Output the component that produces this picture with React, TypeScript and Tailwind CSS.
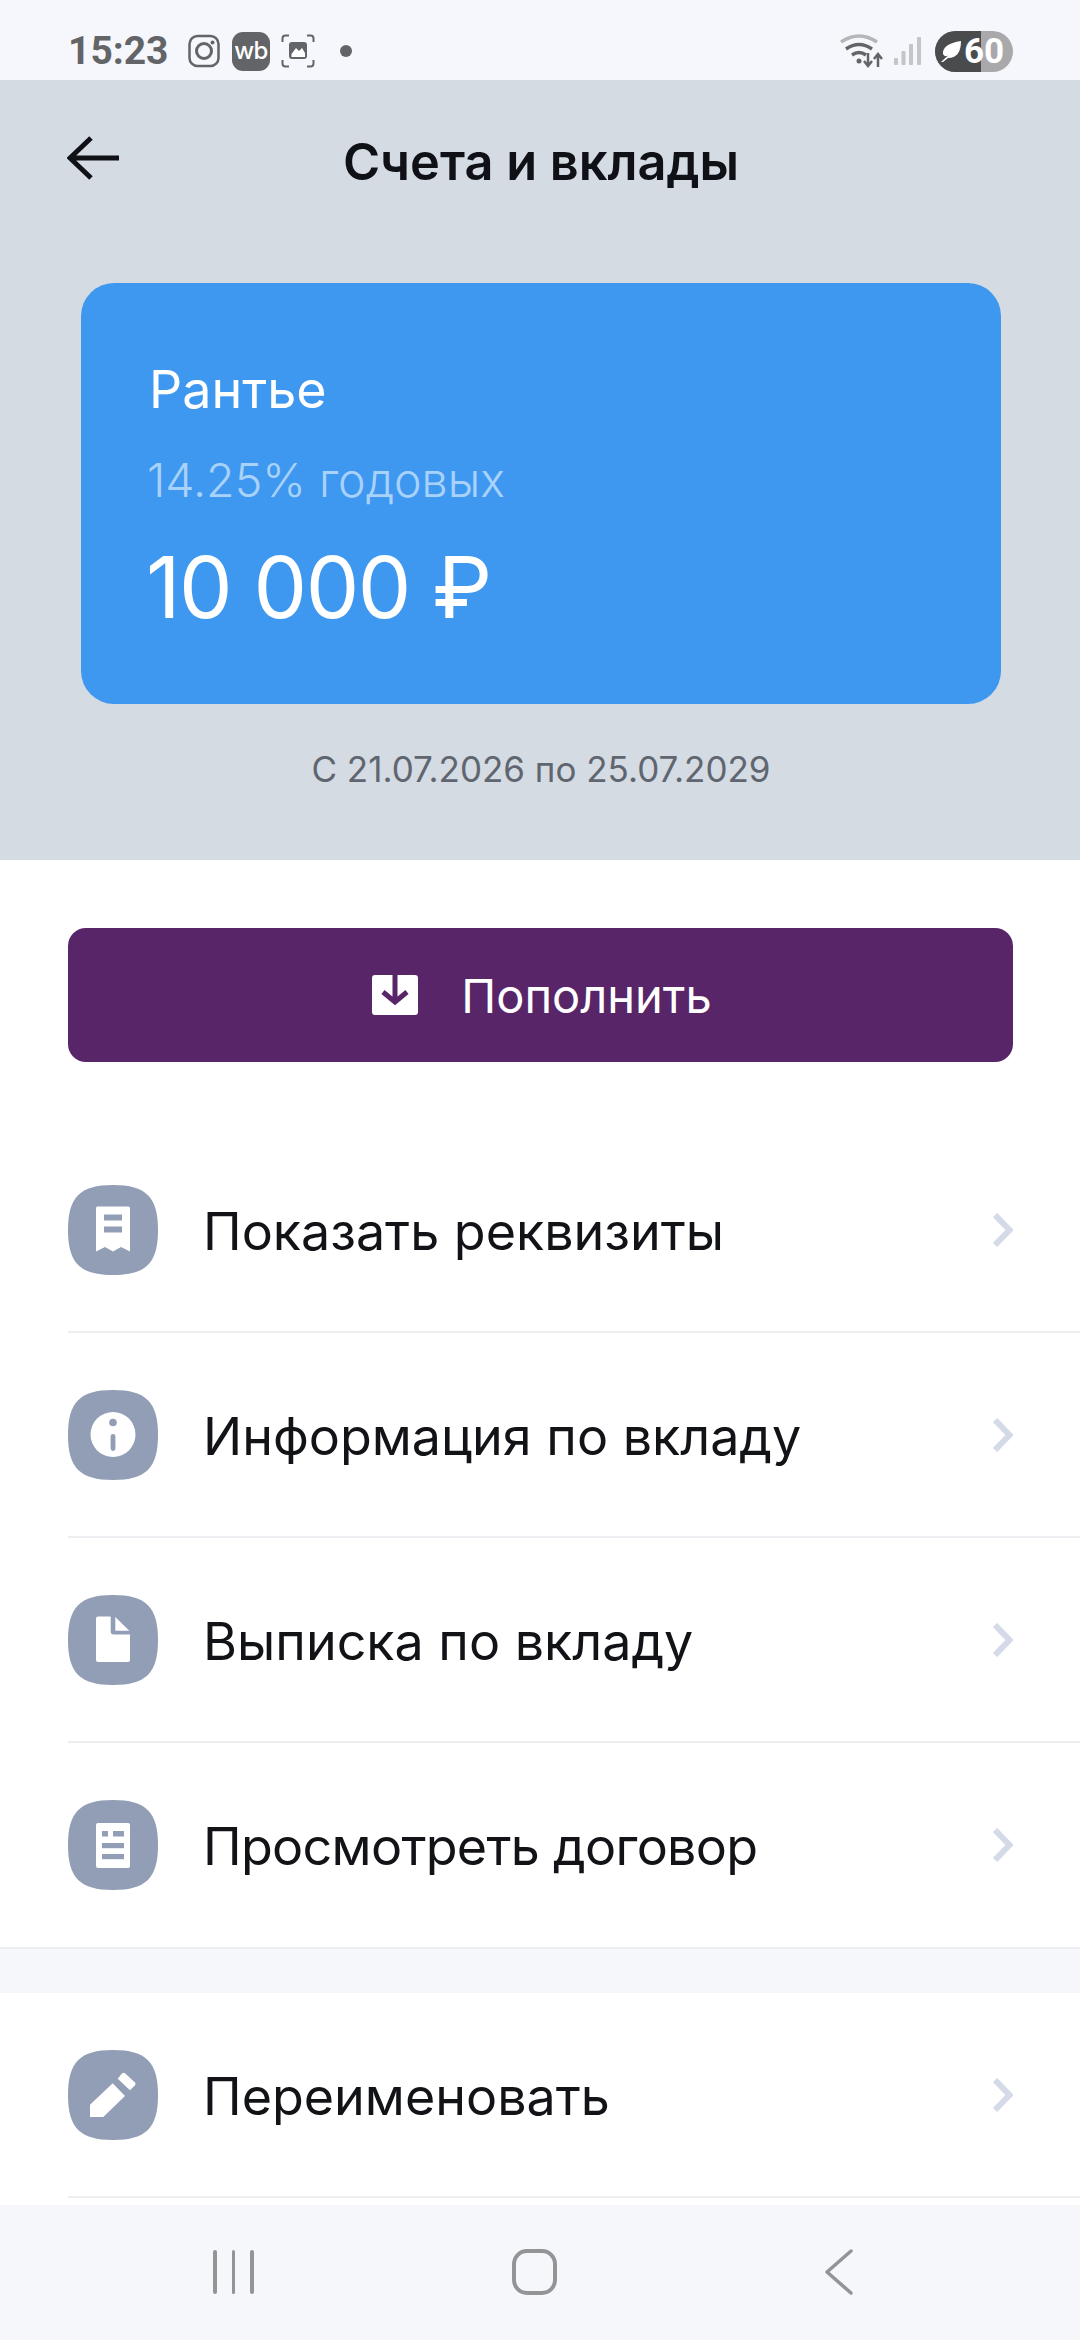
import { ReactNode } from 'react';

const font = { fontFamily: 'Inter, "Noto Sans", sans-serif' };
const ICON_BG = '#919eb5';

function Squircle({ children }: { children: ReactNode }) {
  return (
    <svg width="90" height="90" viewBox="0 0 90 90" className="shrink-0">
      <path
        d="M45 0C78 0 90 12 90 45C90 78 78 90 45 90C12 90 0 78 0 45C0 12 12 0 45 0Z"
        fill={ICON_BG}
      />
      {children}
    </svg>
  );
}

const ReceiptIcon = () => (
  <Squircle>
    <path d="M28 23Q28 21.500 29.500 21.500H60.500Q62 21.500 62 23V66.500L53 62L45 66.500L37 62L28 66.500Z" fill="#fff" />
    <rect x="36" y="29.500" width="18" height="6" fill={ICON_BG} />
    <rect x="36" y="41.500" width="18" height="6" fill={ICON_BG} />
  </Squircle>
);

const InfoIcon = () => (
  <Squircle>
    <circle cx="45" cy="44.500" r="22.500" fill="#fff" />
    <circle cx="45" cy="32.500" r="3.800" fill={ICON_BG} />
    <rect x="42.600" y="44" width="4.800" height="17" rx="2.400" fill={ICON_BG} />
  </Squircle>
);

const FileIcon = () => (
  <Squircle>
    <path d="M28 23.500Q28 21.500 30 21.500H42.700V36.500Q42.700 39.500 45.700 39.500H62V65Q62 67 60 67H30Q28 67 28 65Z" fill="#fff" />
    <path d="M47.300 22L61.300 35.700H47.300Z" fill="#fff" />
  </Squircle>
);

const ContractIcon = () => (
  <Squircle>
    <rect x="28" y="23" width="34" height="45" rx="2" fill="#fff" />
    <rect x="34" y="31" width="6" height="5.500" fill={ICON_BG} />
    <rect x="45" y="31" width="11" height="5.500" fill={ICON_BG} />
    <rect x="34" y="43" width="22" height="5.200" fill={ICON_BG} />
    <rect x="34" y="54" width="22" height="5.200" fill={ICON_BG} />
  </Squircle>
);

const PencilIcon = () => (
  <Squircle>
    <path d="M22 54.700L44.700 33.300L57 46L35.300 67H22Z" fill="#fff" />
    <path d="M49.700 28.700L54 23.500Q55.300 22 57 23.300L67 32.500Q68.200 33.800 67 35.200L62 40.200Z" fill="#fff" />
  </Squircle>
);

function Chevron() {
  return (
    <svg width="20" height="34" viewBox="0 0 20 34" fill="none" className="shrink-0">
      <path d="M2 2L16.500 17L2 32" stroke="#d5dae8" strokeWidth="6" />
    </svg>
  );
}

function Row({ icon, label, line = true, tight = false }: { icon: ReactNode; label: string; line?: boolean; tight?: boolean }) {
  return (
    <div className="pl-[68px]">
      <div className={`flex items-center pr-[67px] ${line ? 'h-[205px] border-b-2 border-[#eceef1]' : 'h-[204px]'}`}>
        {icon}
        <span className={`ml-[45px] mt-[4px] flex-1 text-[52px] leading-none text-[#111317] ${tight ? 'tracking-[-0.700px]' : ''}`}>{label}</span>
        <Chevron />
      </div>
    </div>
  );
}

function StatusBar() {
  return (
    <div className="flex h-[80px] shrink-0 items-center justify-between bg-[#f5f7fc] pl-[68px] pr-[67px] pt-[22px]">
      <div className="flex items-center">
        <span className="w-[97px] text-[39px] font-bold leading-none text-[#636467]" style={{ fontFamily: 'Roboto, sans-serif' }}>15:23</span>
        <svg width="32" height="34" viewBox="0 0 32 34" fill="none" className="ml-[23px]">
          <rect x="1.500" y="2" width="29" height="30" rx="8" stroke="#636467" strokeWidth="2.500" />
          <circle cx="16" cy="17" r="7.500" stroke="#636467" strokeWidth="3" />
          <circle cx="24.500" cy="8.500" r="2" fill="#636467" />
        </svg>
        <div className="ml-[12px] flex h-[39px] w-[38px] items-center justify-center rounded-[11px] bg-[#636467] text-[24px] font-medium leading-none tracking-[-0.500px] text-white">wb</div>
        <svg width="34" height="34" viewBox="0 0 34 34" fill="none" className="ml-[11px]">
          <path d="M1.500 8V4.500Q1.500 1.500 4.500 1.500H8M26 1.500H29.500Q32.500 1.500 32.500 4.500V8M32.500 26V29.500Q32.500 32.500 29.500 32.500H26M8 32.500H4.500Q1.500 32.500 1.500 29.500V26" stroke="#636467" strokeWidth="2" />
          <rect x="8" y="8" width="18" height="17" rx="3" fill="#636467" />
          <path d="M10.500 23V20L15 14L18 17L21 14L24 19V23Z" fill="#fff" />
        </svg>
        <div className="ml-[25px] h-[12px] w-[12px] rounded-full bg-[#636467]" />
      </div>
      <div className="flex items-center">
        <svg width="44" height="34" viewBox="0 0 44 34" fill="none">
          <path d="M1 8Q19 -4 37 8" stroke="#b5b6b8" strokeWidth="3.500" />
          <path d="M6 15Q19 6 32 15" stroke="#636467" strokeWidth="3.500" />
          <path d="M12 21Q19 16 26 21" stroke="#636467" strokeWidth="3.500" />
          <circle cx="19" cy="27" r="2.500" fill="#636467" />
          <path d="M28 19V32M24 27L28 32L32 27M38 33V20M34 25L38 20L42 25" stroke="#636467" strokeWidth="2.500" />
        </svg>
        <svg width="27" height="28" viewBox="0 0 27 28" className="ml-[10px]">
          <rect x="0" y="21" width="4" height="7" rx="1" fill="#c4c5c6" />
          <rect x="7.500" y="14" width="4" height="14" rx="1" fill="#c4c5c6" />
          <rect x="15" y="7" width="4" height="21" rx="1" fill="#c4c5c6" />
          <rect x="23" y="0" width="4" height="28" rx="1" fill="#c4c5c6" />
        </svg>
        <div className="relative ml-[14px] h-[41px] w-[78px] overflow-hidden rounded-full bg-[#a9a9ab]">
          <div className="absolute inset-y-0 left-0 w-[46px] bg-[#4a4b4d]" />
          <svg width="24" height="24" viewBox="0 0 24 24" className="absolute left-[4px] top-[8px]">
            <path d="M2 23Q6 19 10 16Q6 19 4 15Q3 5 22 2Q22 19 9 19L4 23Z" fill="#fff" />
          </svg>
          <span className="absolute left-[29px] top-0 text-[35px] font-bold leading-[41px] text-white" style={{ fontFamily: 'Roboto, sans-serif' }}>60</span>
        </div>
      </div>
    </div>
  );
}

function NavBar() {
  return (
    <div className="relative z-10 flex h-[135px] shrink-0 items-center bg-[#f5f7fb] pb-[2px]">
      <div className="flex w-full items-center justify-between pl-[213px] pr-[227px]">
        <div className="flex gap-[15px]">
          <div className="h-[44px] w-[3.5px] rounded-full bg-[#939496]" />
          <div className="h-[44px] w-[3.5px] rounded-full bg-[#939496]" />
          <div className="h-[44px] w-[3.5px] rounded-full bg-[#939496]" />
        </div>
        <div className="mr-[8px] h-[46px] w-[45px] rounded-[15px] border-[4px] border-[#939496]" />
        <svg width="29" height="46" viewBox="0 0 29 46" fill="none">
          <path d="M27 2L3 23L27 44" stroke="#939496" strokeWidth="3.500" strokeLinecap="round" strokeLinejoin="round" />
        </svg>
      </div>
    </div>
  );
}

export default function App() {
  return (
    <div className="flex h-[2340px] w-[1080px] flex-col overflow-hidden bg-white" style={font}>
      <StatusBar />

      <div className="h-[780px] shrink-0 bg-[#d5dbe3] pl-[81px] pr-[79px]">
        <div className="relative flex h-[163px] items-center justify-center pt-[1px]">
          <svg width="54" height="44" viewBox="0 0 54 44" fill="none" className="absolute left-[-14px] top-[56px]">
            <path d="M52 22H4M24 2L3 22L24 42" stroke="#0f1116" strokeWidth="5" />
          </svg>
          <h1 className="text-[50.500px] font-semibold leading-none text-[#0f1116]">Счета и вклады</h1>
        </div>

        <div className="mt-[40px] h-[421px] rounded-[33px] bg-[#3f98f0] pl-[68px] pt-[81px]">
          <div className="text-[52px] font-normal leading-none text-white">Рантье</div>
          <div className="ml-[-2px] mt-[41px] text-[46.500px] font-light leading-none text-[#a9d2fa]">14.25% годовых</div>
          <div className="ml-[-3px] mt-[41px] text-[85px] font-normal leading-none tracking-[-1.500px] text-white">10 000 ₽</div>
        </div>

        <div className="mt-[48px] text-center text-[35px] leading-none text-[#5f6670]">С 21.07.2026 по 25.07.2029</div>
      </div>

      <div className="min-h-0 flex-1 overflow-hidden">
        <div className="pb-[66px] pl-[68px] pr-[67px] pt-[68px]">
          <div className="flex h-[134px] items-center justify-center rounded-[18px] bg-[#582568]">
            <svg width="46" height="40" viewBox="0 0 46 40" className="ml-[3px] mr-[43px]">
              <rect width="46" height="40" rx="3" fill="#fff" />
              <path d="M23 0V25M11 17L23 27L35 17" stroke="#582568" strokeWidth="5" fill="none" />
            </svg>
            <span className="text-[47px] leading-none text-white">Пополнить</span>
          </div>
        </div>

        <Row icon={<ReceiptIcon />} label="Показать реквизиты" />
        <Row icon={<InfoIcon />} label="Информация по вкладу" />
        <Row icon={<FileIcon />} label="Выписка по вкладу" />
        <Row icon={<ContractIcon />} label="Просмотреть договор" line={false} tight />

        <div className="h-[46px] border-t-2 border-[#eceef1] bg-[#f5f7fb]" />

        <Row icon={<PencilIcon />} label="Переименовать" />
      </div>

      <NavBar />
    </div>
  );
}
